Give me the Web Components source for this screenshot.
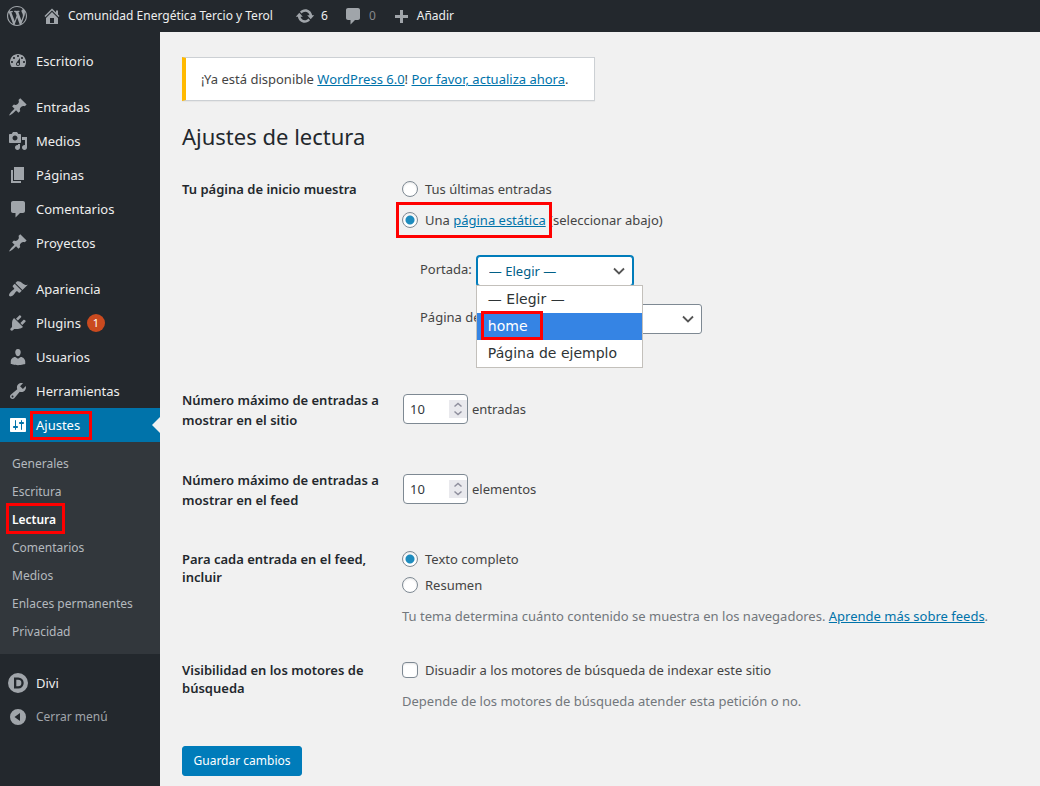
<!DOCTYPE html>
<html lang="es">
<head>
<meta charset="utf-8">
<meta name="viewport" content="width=device-width, initial-scale=1">
<title>Ajustes de lectura</title>
<style>
  html { background: #f1f1f1; }
  body {
    margin: 0;
    font: 13px/18px "Noto Sans", "Open Sans", sans-serif;
    color: #444;
    --accent: #0073aa;
    --mark: #f00;
  }
</style>
</head>
<body>
<admin-shell>
  <admin-bar slot="bar">
    <bar-item icon="wordpress" label="WordPress"></bar-item>
    <bar-item icon="home">Comunidad Energética Tercio y Terol</bar-item>
    <bar-item icon="update">6</bar-item>
    <bar-item icon="comment" dim>0</bar-item>
    <bar-item icon="plus">Añadir</bar-item>
  </admin-bar>

  <admin-menu slot="menu">
    <menu-item icon="dashboard">Escritorio</menu-item>
    <menu-gap></menu-gap>
    <menu-item icon="pin">Entradas</menu-item>
    <menu-item icon="media">Medios</menu-item>
    <menu-item icon="page">Páginas</menu-item>
    <menu-item icon="comment">Comentarios</menu-item>
    <menu-item icon="pin">Proyectos</menu-item>
    <menu-gap></menu-gap>
    <menu-item icon="brush">Apariencia</menu-item>
    <menu-item icon="plug" count="1">Plugins</menu-item>
    <menu-item icon="user">Usuarios</menu-item>
    <menu-item icon="wrench">Herramientas</menu-item>
    <menu-item icon="sliders" current>Ajustes</menu-item>
    <sub-menu>
      <sub-item>Generales</sub-item>
      <sub-item>Escritura</sub-item>
      <sub-item current>Lectura</sub-item>
      <sub-item>Comentarios</sub-item>
      <sub-item>Medios</sub-item>
      <sub-item>Enlaces permanentes</sub-item>
      <sub-item>Privacidad</sub-item>
    </sub-menu>
    <menu-gap></menu-gap>
    <menu-item icon="divi">Divi</menu-item>
    <menu-item icon="collapse" quiet>Cerrar menú</menu-item>
  </admin-menu>

  <reading-settings></reading-settings>
</admin-shell>

<script>
// Each element is prepared while still detached, so nested elements see their attributes when they connect.
const define = (name, html, setup) => {
  const template = document.createElement('template');
  template.innerHTML = html;
  customElements.define(name, class extends HTMLElement {
    connectedCallback() {
      if (this.shadowRoot) return;
      const content = template.content.cloneNode(true);
      if (setup) setup(this, content);
      this.attachShadow({ mode: 'open' }).append(content);
    }
  });
};

const ICONS = {
  wordpress: 'M20 10c0-5.51-4.49-10-10-10C4.48 0 0 4.49 0 10c0 5.52 4.48 10 10 10 5.51 0 10-4.48 10-10zM7.78 15.37L4.37 6.22c.55-.02 1.17-.08 1.17-.08.5-.06.44-1.13-.06-1.11 0 0-1.45.11-2.37.11-.18 0-.37 0-.58-.01C4.12 2.69 6.87 1.11 10 1.11c2.33 0 4.45.87 6.05 2.34-.68-.11-1.65.39-1.65 1.58 0 .74.45 1.36.9 2.1.35.61.55 1.36.55 2.46 0 1.49-1.4 5-1.4 5l-3.03-8.37c.54-.02.82-.17.82-.17.5-.05.44-1.25-.06-1.22 0 0-1.44.12-2.38.12-.87 0-2.33-.12-2.33-.12-.5-.03-.56 1.2-.06 1.22l.92.08 1.26 3.41zM17.41 10c.24-.64.74-1.87.43-4.25.7 1.29 1.05 2.71 1.05 4.25 0 3.29-1.73 6.24-4.4 7.78.97-2.59 1.94-5.2 2.92-7.78zM6.1 18.09C3.12 16.65 1.11 13.53 1.11 10c0-1.3.23-2.48.72-3.59C3.25 10.3 4.67 14.2 6.1 18.09zm4.03-6.63l2.58 6.98c-.86.29-1.76.45-2.71.45-.79 0-1.57-.11-2.29-.33.81-2.38 1.62-4.74 2.42-7.1z',
  home: 'M16 8.5l1.53 1.53-1.06 1.06L10 4.6l-6.47 6.49-1.06-1.06L10 2.5l4 4v-2h2v4zm-6-2.46l6 5.99V18H4v-5.97zM12 17v-5H8v5h4z',
  update: 'M10.2 3.28c3.53 0 6.43 2.61 6.92 6h2.08l-3.5 4-3.5-4h2.32c-.45-1.97-2.21-3.45-4.32-3.45-1.45 0-2.73.71-3.54 1.78L4.95 5.66C6.23 4.2 8.11 3.28 10.2 3.28zm-.4 13.44c-3.52 0-6.43-2.61-6.92-6H.8l3.5-4c1.17 1.33 2.33 2.67 3.5 4H5.48c.45 1.97 2.21 3.45 4.32 3.45 1.45 0 2.73-.71 3.54-1.78l1.71 1.95c-1.28 1.46-3.15 2.38-5.25 2.38z',
  comment: 'M5 2h10c1.1 0 2 .9 2 2v8c0 1.1-.9 2-2 2h-3l-4.5 4.5V14H5c-1.1 0-2-.9-2-2V4c0-1.1.9-2 2-2z',
  plus: 'M17 9v3h-5v5H9v-5H4V9h5V4h3v5z',
  dashboard: 'M3.76 16h12.48c1.1-1.37 1.76-3.11 1.76-5 0-4.42-3.58-8-8-8s-8 3.58-8 8c0 1.89.66 3.63 1.76 5zM10 4c.55 0 1 .45 1 1s-.45 1-1 1-1-.45-1-1 .45-1 1-1zM6 6c.55 0 1 .45 1 1s-.45 1-1 1-1-.45-1-1 .45-1 1-1zm8 0c.55 0 1 .45 1 1s-.45 1-1 1-1-.45-1-1 .45-1 1-1zm-5.37 5.55L12 7v6c0 1.1-.9 2-2 2s-2-.9-2-2c0-.57.24-1.08.63-1.45zM4 10c.55 0 1 .45 1 1s-.45 1-1 1-1-.45-1-1 .45-1 1-1zm12 0c.55 0 1 .45 1 1s-.45 1-1 1-1-.45-1-1 .45-1 1-1zm-5 3c0-.55-.45-1-1-1s-1 .45-1 1 .45 1 1 1 1-.45 1-1z',
  pin: 'M10.44 3.02l1.82-1.82 6.36 6.35-1.83 1.82c-1.05-.68-2.48-.57-3.41.36l-.75.75c-.92.93-1.04 2.35-.35 3.41l-1.83 1.82-2.41-2.41-2.8 2.79c-.42.42-3.38 2.71-3.8 2.29s1.86-3.39 2.28-3.81l2.79-2.79L4.1 9.36l1.83-1.82c1.05.69 2.48.57 3.4-.36l.75-.75c.93-.92 1.05-2.35.36-3.41z',
  media: 'M13 11V4c0-.55-.45-1-1-1h-1.67L9 1H5L3.67 3H2c-.55 0-1 .45-1 1v7c0 .55.45 1 1 1h10c.55 0 1-.45 1-1zM7 4.5c1.38 0 2.5 1.12 2.5 2.5S8.38 9.5 7 9.5 4.5 8.38 4.5 7 5.62 4.5 7 4.5zM14 6h5v10.5c0 1.38-1.12 2.5-2.5 2.5S14 17.88 14 16.5s1.12-2.5 2.5-2.5c.17 0 .34.02.5.05V9h-3V6zm-4 8.05V13h2v3.5c0 1.38-1.12 2.5-2.5 2.5S7 17.88 7 16.5 8.12 14 9.5 14c.17 0 .34.02.5.05z',
  page: 'M6 15V2h10v13H6zm-1 1h8v2H3V5h2v11z',
  brush: 'M14.48 11.06L7.41 3.99l1.5-1.5c.5-.56 2.3-.47 3.51.32 1.21.8 1.43 1.28 2.91 2.1 1.18.64 2.45 1.26 4.45.85zm-.71.71L6.7 4.7 4.93 6.47c-.39.39-.39 1.02 0 1.41l1.06 1.06c.39.39.39 1.03 0 1.42-.6.6-1.43 1.11-2.21 1.69-.35.26-.7.53-1.01.84C1.43 14.23.4 16.08 1.4 17.07c.99 1 2.84-.03 4.18-1.36.31-.31.58-.66.85-1.02.57-.78 1.08-1.61 1.69-2.21.39-.39 1.02-.39 1.41 0l1.06 1.06c.39.39 1.02.39 1.41 0z',
  plug: 'M13.11 4.36L9.87 7.6 8 5.73l3.24-3.24c.35-.34 1.05-.2 1.56.32.52.51.66 1.21.31 1.55zm-8 1.77l.91-1.12 9.01 9.01-1.19.84c-.71.71-2.63 1.16-3.82 1.16H6.14L4.9 17.26c-.59.59-1.54.59-2.12 0-.59-.58-.59-1.53 0-2.12l1.24-1.24v-3.88c0-1.13.4-3.19 1.09-3.89zm7.26 3.97l3.24-3.24c.34-.35 1.04-.21 1.55.31.52.51.66 1.21.31 1.55l-3.24 3.25z',
  user: 'M10 9.25c-2.27 0-2.73-3.44-2.73-3.44C7 4.02 7.82 2 9.97 2c2.16 0 2.98 2.02 2.71 3.81 0 0-.41 3.44-2.68 3.44zm0 2.57L12.72 10c2.39 0 4.52 2.33 4.52 4.53v2.49s-3.65 1.13-7.24 1.13c-3.65 0-7.24-1.13-7.24-1.13v-2.49c0-2.25 1.94-4.48 4.47-4.48z',
  wrench: 'M16.68 9.77c-1.34 1.34-3.3 1.67-4.95.99l-5.41 6.52c-.99.99-2.59.99-3.58 0s-.99-2.59 0-3.57l6.52-5.42c-.68-1.65-.35-3.61.99-4.95 1.28-1.28 3.12-1.62 4.72-1.06l-2.89 2.89 2.82 2.82 2.86-2.87c.53 1.58.18 3.39-1.08 4.65zM3.81 16.21c.4.39 1.04.39 1.43 0 .4-.4.4-1.04 0-1.43-.39-.4-1.03-.4-1.43 0-.39.39-.39 1.03 0 1.43z',
  sliders: 'M18 16V4c0-.55-.45-1-1-1H3c-.55 0-1 .45-1 1v12c0 .55.45 1 1 1h14c.55 0 1-.45 1-1zM8 11h1c.55 0 1 .45 1 1s-.45 1-1 1H8v1.5c0 .28-.22.5-.5.5s-.5-.22-.5-.5V13H6c-.55 0-1-.45-1-1s.45-1 1-1h1V5.5c0-.28.22-.5.5-.5s.5.22.5.5V11zm5-2h-1c-.55 0-1-.45-1-1s.45-1 1-1h1V5.5c0-.28.22-.5.5-.5s.5.22.5.5V7h1c.55 0 1 .45 1 1s-.45 1-1 1h-1v5.5c0 .28-.22.5-.5.5s-.5-.22-.5-.5V9z',
  divi: 'M10 0a10 10 0 1 0 0 20a10 10 0 0 0 0-20zM6 4.5h4.2a5.5 5.5 0 0 1 0 11H6zM8.3 6.7v6.6h1.8a3.3 3.3 0 0 0 0-6.6z',
  collapse: 'M10 2a8 8 0 1 0 0 16a8 8 0 0 0 0-16zM12 6v8L6.5 10z'
};

define('wp-icon', `
  <style>
    :host { display: block; flex: none; width: 20px; height: 20px; }
    svg { display: block; width: 100%; height: 100%; fill: currentColor; fill-rule: evenodd; }
  </style>
  <svg viewBox="0 0 20 20" aria-hidden="true"><path/></svg>
`, (host, root) => root.querySelector('path').setAttribute('d', ICONS[host.getAttribute('name')]));

define('admin-shell', `
  <style>
    :host { display: grid; grid-template: auto 1fr / 160px 1fr; min-height: 100vh; }
    header { grid-column: 1 / -1; background: #23282d; }
    nav { background: #23282d; }
    main { min-width: 0; padding: 25px 20px 10px 22px; }
  </style>
  <header><slot name="bar"></slot></header>
  <nav><slot name="menu"></slot></nav>
  <main><slot></slot></main>
`);

define('admin-bar', `
  <style>:host { display: flex; height: 32px; padding-left: 7px; gap: 15px; font-size: 12px; }</style>
  <slot></slot>
`);

define('bar-item', `
  <style>
    :host { display: block; color: #eee; }
    :host([icon="home"]) { min-width: 238px; }
    a { display: flex; align-items: center; gap: 6px; height: 32px; color: inherit; text-decoration: none; }
    wp-icon { color: #a0a5aa; }
    :host([dim]) span { color: #86898c; }
  </style>
  <a href="#"><wp-icon></wp-icon><span><slot></slot></span></a>
`, (host, root) => {
  root.querySelector('wp-icon').setAttribute('name', host.getAttribute('icon'));
  if (host.hasAttribute('label')) {
    root.querySelector('a').setAttribute('aria-label', host.getAttribute('label'));
    root.querySelector('span').remove();
  }
});

define('admin-menu', `
  <style>:host { display: block; padding: 12px 0; }</style>
  <slot></slot>
`);

define('menu-gap', `<style>:host { display: block; height: 12px; }</style>`);

define('menu-item', `
  <style>
    :host { display: block; position: relative; color: #eee; }
    a { display: flex; align-items: center; gap: 8px; height: 34px; padding: 0 8px; color: inherit; text-decoration: none; }
    wp-icon { color: #a0a5aa; }
    .count { min-width: 18px; height: 18px; border-radius: 9px; background: #ca4a1f; color: #fff;
      font-size: 11px; line-height: 18px; text-align: center; margin-left: -2px; }
    :host([quiet]) { font-size: 12px; color: #a0a5aa; }
    :host([current]) { background: var(--accent); color: #fff; }
    :host([current]) wp-icon { color: #fff; }
    :host([current])::before { content: ""; position: absolute; left: 30px; top: 3px; width: 56px; height: 23px;
      border: 3px solid var(--mark); }
    :host([current])::after { content: ""; position: absolute; right: 0; top: 9px;
      border: 8px solid transparent; border-left: 0; border-right-color: #f1f1f1; }
  </style>
  <a href="#"><wp-icon></wp-icon><span><slot></slot></span></a>
`, (host, root) => {
  root.querySelector('wp-icon').setAttribute('name', host.getAttribute('icon'));
  if (host.hasAttribute('count')) {
    const badge = document.createElement('span');
    badge.className = 'count';
    badge.textContent = host.getAttribute('count');
    root.querySelector('a').append(badge);
  }
});

define('sub-menu', `
  <style>:host { display: block; padding: 8px 0; background: #32373c; font-size: 12px; }</style>
  <slot></slot>
`);

define('sub-item', `
  <style>
    :host { display: block; position: relative; color: #b4b9be; }
    a { display: block; padding: 5px 12px; color: inherit; text-decoration: none; }
    :host([current]) { color: #fff; font-weight: 600; }
    :host([current])::before { content: ""; position: absolute; left: 6px; top: -3px; width: 53px; height: 25px;
      border: 3px solid var(--mark); }
  </style>
  <a href="#"><slot></slot></a>
`);

define('update-notice', `
  <style>
    :host { display: block; width: fit-content; box-sizing: border-box; padding: 12px 25px 12px 15px;
      background: #fff; border: 1px solid #ccd0d4; border-left: 4px solid #ffb900; box-shadow: 0 1px 1px rgba(0,0,0,.04); }
  </style>
  <slot></slot>
`);

define('setting-row', `
  <style>
    :host { display: grid; grid-template-columns: 200px minmax(0, 1fr); column-gap: 20px; }
    .head { padding: 20px 0; font-weight: 600; color: #23282d; }
    .body { padding: 20px 0 16px; }
  </style>
  <div class="head"><slot name="head"></slot></div>
  <div class="body"><slot></slot></div>
`);

define('choice-option', `
  <style>
    :host { display: block; position: relative; }
    label { display: flex; align-items: center; gap: 7px; }
    input { appearance: none; flex: none; box-sizing: border-box; width: 16px; height: 16px; margin: 0;
      border: 1px solid #7e8993; border-radius: 4px; background: #fff; box-shadow: inset 0 1px 2px rgba(0,0,0,.1); }
    input[type="radio"] { border-radius: 50%; }
    input[type="radio"]:checked { background: radial-gradient(circle, #1e8cbe 4px, #fff 5px); }
    input[type="checkbox"]:checked { background: #1e8cbe; }
    :host([marked])::after { content: ""; position: absolute; left: -6px; top: -9px; width: 150px; height: 30px;
      border: 3px solid var(--mark); pointer-events: none; }
  </style>
  <label><input><span><slot></slot></span></label>
`, (host, root) => {
  const input = root.querySelector('input');
  input.type = host.getAttribute('type') || 'radio';
  input.checked = host.hasAttribute('checked');
  input.addEventListener('change', () => host.dispatchEvent(new CustomEvent('choose', { bubbles: true })));
});

define('choice-group', `
  <style>
    :host { display: flex; flex-direction: column; gap: 8px; }
    :host([loose]) { gap: 13px; }
  </style>
  <slot></slot>
`, host => host.addEventListener('choose', event => {
  for (const option of host.querySelectorAll('choice-option')) {
    if (option !== event.target) option.shadowRoot.querySelector('input').checked = false;
  }
}));

define('page-select', `
  <style>
    :host { display: block; }
    .line { display: flex; align-items: center; gap: 5px; }
    label { padding-bottom: 4px; }
    .box { position: relative; color: #32373c; }
    :host([open]) .box { z-index: 2; }
    select { appearance: none; display: block; box-sizing: border-box; width: 156px; height: 30px; margin: 0;
      padding: 0 24px 0 11px; border: 1px solid #7e8993; border-radius: 3px; background: #fff;
      font: inherit; color: inherit; }
    :host([open]) select { border-color: #007cba; box-shadow: 0 0 0 1px #007cba; color: #016087; outline: 0; }
    svg { position: absolute; right: 8px; top: 9px; width: 12px; height: 12px; pointer-events: none; }
    ul { position: absolute; left: -1px; top: 29px; margin: 0; padding: 0; list-style: none; width: 165px;
      border: 1px solid #c3c0bb; background: #fff; color: #2e3436; font: 14px/27px "DejaVu Sans", sans-serif; }
    li { padding: 0 11px; white-space: nowrap; }
    li.active { position: relative; background: #3584e4; color: #fff; }
    li.active::after { content: ""; position: absolute; left: 4px; top: -2px; width: 56px; height: 23px;
      border: 3px solid var(--mark); }
  </style>
  <div class="line">
    <label for="field"><slot></slot></label>
    <div class="box">
      <select id="field"><option>— Elegir —</option><option>home</option><option>Página de ejemplo</option></select>
      <svg viewBox="0 0 12 12" fill="none" stroke="#555" stroke-width="1.8" aria-hidden="true"><path d="M1 3.500l5 5 5-5"/></svg>
    </div>
  </div>
`, (host, root) => {
  if (!host.hasAttribute('open')) return;
  const list = document.createElement('ul');
  list.setAttribute('role', 'listbox');
  list.innerHTML = '<li role="option">— Elegir —</li><li role="option" class="active" aria-selected="true">home</li><li role="option">Página de ejemplo</li>';
  root.querySelector('.box').append(list);
});

define('number-field', `
  <style>
    :host { display: block; padding: 4px 1px; }
    label { display: flex; align-items: center; gap: 4px; }
    .box { position: relative; }
    input { appearance: textfield; display: block; box-sizing: border-box; width: 65px; height: 30px; margin: 0;
      padding: 0 20px 0 6px; border: 1px solid #7e8993; border-radius: 4px; background: #fff;
      font: 13px "Noto Sans", sans-serif; color: #32373c; }
    input::-webkit-inner-spin-button { appearance: none; margin: 0; }
    .spin { position: absolute; right: 1px; top: 6px; width: 18px; height: 18px; background: #e9e9ed; }
    svg { display: block; }
  </style>
  <label>
    <span class="box">
      <input type="number" min="1" value="10">
      <span class="spin"><svg width="18" height="18" viewBox="0 0 18 18" fill="none" stroke="#8f8f9d" stroke-width="1.5" aria-hidden="true"><path d="M5.500 6.500L9 3.500l3.500 3M5.500 11.500L9 14.500l3.500-3"/></svg></span>
    </span>
    <span><slot></slot></span>
  </label>
`);

define('reading-settings', `
  <style>
    :host { display: block; }
    a { color: var(--accent); }
    h1 { margin: 16px 0 4px; font-size: 22px; line-height: 39px; font-weight: 400; color: #23282d; }
    .wide { display: block; line-height: 20px; }
    .pages { display: grid; gap: 18px; margin: 27px 0 20px 18px; }
    .note { margin: 13px 0 0; color: #72777c; }
    button { display: block; height: 30px; margin: 20px 0 0; padding: 0 10px; border: 1px solid #007cba; border-radius: 3px;
      background: #007cba; color: #fff; font: inherit; font-size: 12px; min-width: 120px; }
  </style>
  <update-notice>¡Ya está disponible <a href="#">WordPress 6.0</a>! <a href="#">Por favor, actualiza ahora</a>.</update-notice>
  <h1>Ajustes de lectura</h1>
  <form>
    <setting-row>
      <span slot="head">Tu página de inicio muestra</span>
      <choice-group loose>
        <choice-option>Tus últimas entradas</choice-option>
        <choice-option checked marked>Una <a href="#">página estática</a> (seleccionar abajo)</choice-option>
      </choice-group>
      <div class="pages">
        <page-select open>Portada:</page-select>
        <page-select>Página de entradas:</page-select>
      </div>
    </setting-row>
    <setting-row>
      <span slot="head" class="wide">Número máximo de entradas a mostrar en el sitio</span>
      <number-field>entradas</number-field>
    </setting-row>
    <setting-row>
      <span slot="head" class="wide">Número máximo de entradas a mostrar en el feed</span>
      <number-field>elementos</number-field>
    </setting-row>
    <setting-row>
      <span slot="head">Para cada entrada en el feed, incluir</span>
      <choice-group>
        <choice-option checked>Texto completo</choice-option>
        <choice-option>Resumen</choice-option>
      </choice-group>
      <p class="note">Tu tema determina cuánto contenido se muestra en los navegadores. <a href="#">Aprende más sobre feeds</a>.</p>
    </setting-row>
    <setting-row>
      <span slot="head">Visibilidad en los motores de búsqueda</span>
      <choice-option type="checkbox">Disuadir a los motores de búsqueda de indexar este sitio</choice-option>
      <p class="note">Depende de los motores de búsqueda atender esta petición o no.</p>
    </setting-row>
    <button type="button">Guardar cambios</button>
  </form>
`);
</script>
</body>
</html>
